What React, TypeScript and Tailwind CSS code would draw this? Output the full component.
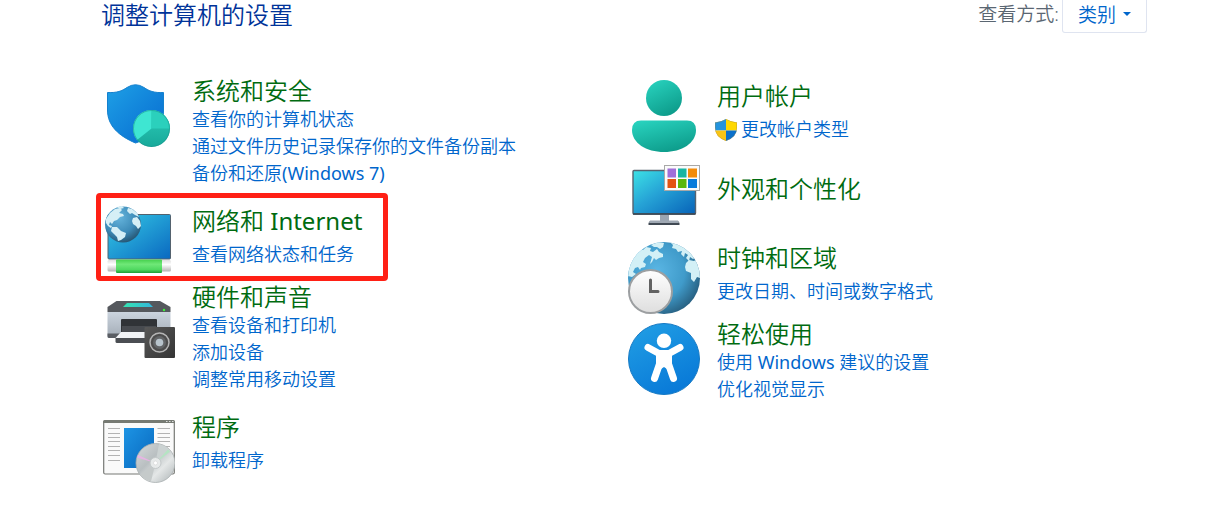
import type { ReactNode } from "react";

const cjk = "font-['Noto_Sans','Noto_Sans_CJK_SC',sans-serif]";

function SecurityIcon() {
  return (
    <svg className="mt-2 h-[66px] w-[72px] shrink-0" viewBox="0 0 72 66" aria-hidden="true">
      <defs>
        <linearGradient id="secShield" x1="0" y1="0" x2="1" y2="1">
          <stop offset="0" stopColor="#1ea0e6" />
          <stop offset="1" stopColor="#0669cf" />
        </linearGradient>
        <linearGradient id="secPie" x1="0" y1="0" x2="0" y2="1">
          <stop offset="0" stopColor="#2dccb8" />
          <stop offset="1" stopColor="#17a99a" />
        </linearGradient>
      </defs>
      <path d="M4.500 8.500C14 9 19 7 24 3.500Q32.500 -2 41 3.500C46 7 51 9 60.500 8.500V27C60.500 44 48 54 32.500 59C16 52 4.500 42 4.500 26Z" fill="url(#secShield)" stroke="#1480ce" strokeWidth="1" />
      <circle cx="48.500" cy="44.500" r="18.500" fill="url(#secPie)" />
      <path d="M48.500 44.500L34 56A18.500 18.500 0 0 1 48.500 26Z" fill="#3ee6d2" />
      <path d="M48.500 26A18.500 18.500 0 0 1 67 44.500H48.500Z" fill="#2bd0bc" />
      <circle cx="48.500" cy="44.500" r="18" fill="none" stroke="#178f88" strokeOpacity=".5" />
    </svg>
  );
}

function NetworkIcon() {
  return (
    <svg className="h-[68px] w-[72px] shrink-0" viewBox="0 0 72 68" aria-hidden="true">
      <defs>
        <linearGradient id="netScreen" x1="0" y1="0" x2="1" y2="1">
          <stop offset="0" stopColor="#35cbe6" />
          <stop offset="1" stopColor="#0a68c0" />
        </linearGradient>
        <radialGradient id="netGlobe" cx=".4" cy=".3" r=".75">
          <stop offset="0" stopColor="#65b4dc" />
          <stop offset=".6" stopColor="#3d8bb8" />
          <stop offset="1" stopColor="#24506c" />
        </radialGradient>
        <linearGradient id="netCable" x1="0" y1="0" x2="0" y2="1">
          <stop offset="0" stopColor="#45d04c" />
          <stop offset=".35" stopColor="#6fe878" />
          <stop offset=".75" stopColor="#4fd860" />
          <stop offset="1" stopColor="#1b9d35" />
        </linearGradient>
        <linearGradient id="netPlug" x1="0" y1="0" x2="0" y2="1">
          <stop offset="0" stopColor="#dedede" />
          <stop offset=".4" stopColor="#ffffff" />
          <stop offset="1" stopColor="#b4b4b4" />
        </linearGradient>
      </defs>
      <rect x="5" y="8.500" width="62.500" height="44.500" rx="1" fill="url(#netScreen)" stroke="#53626e" />
      <rect x="4.500" y="54" width="63.500" height="11.500" rx="1.500" fill="url(#netPlug)" />
      <rect x="13" y="53.500" width="46" height="13.500" rx="1" fill="url(#netCable)" />
      <circle cx="20" cy="18.500" r="18" fill="url(#netGlobe)" />
      <g fill="#d5eff6">
        <path d="M3 13L7 7L12 3L17 2L19 4L16 7L20 8L21 10L17 11L14 14L11 15L9 18L7 16L6 19L9 20L8 22L5 20L3 17Z" />
        <path d="M9 21L14 21L18 25L23 27L22 31L18 34L15 35L14 31L11 28L8 25Z" />
        <path d="M14 1L19 0L21 2L17 3Z" />
        <path d="M25 2L29 3L34 7L36 11L32 9L29 7L27 8L24 5Z" />
        <path d="M30 12L34 11L37 15L38 20L35 23L33 20L30 18L29 15Z" />
      </g>
    </svg>
  );
}

function HardwareIcon() {
  return (
    <svg className="mt-[18px] h-[60px] w-[72px] shrink-0" viewBox="0 0 72 60" aria-hidden="true">
      <defs>
        <linearGradient id="hwBody" x1="0" y1="0" x2="0" y2="1">
          <stop offset="0" stopColor="#cbd4de" />
          <stop offset="1" stopColor="#a2abb5" />
        </linearGradient>
        <linearGradient id="hwGlass" x1="0" y1="0" x2="1" y2="0">
          <stop offset="0" stopColor="#35e5b1" />
          <stop offset="1" stopColor="#33b5dc" />
        </linearGradient>
        <linearGradient id="hwBox" x1="0" y1="0" x2="1" y2="1">
          <stop offset="0" stopColor="#585858" />
          <stop offset="1" stopColor="#343434" />
        </linearGradient>
      </defs>
      <path d="M13.500 1H57L67.500 7V12H4.500V7Z" fill="#55585d" />
      <path d="M24 3H46L50 7H20Z" fill="url(#hwGlass)" />
      <circle cx="61" cy="10" r="1.200" fill="#3cf43a" />
      <path d="M4.500 12H67.500V36.500Q67.500 38 66 38H6Q4.500 38 4.500 36.500Z" fill="url(#hwBody)" />
      <path d="M4.500 33.500H17L14 38H6Q4.500 38 4.500 36Z" fill="#5a5e64" />
      <rect x="18" y="19" width="36" height="14" rx="1" fill="#303337" />
      <path d="M19 26H53V33H19Z" fill="#484b50" />
      <path d="M18 32H44V38H12.500Z" fill="#f1f3f6" />
      <path d="M12.500 38H44V43H14Q12.500 43 12.500 41.500Z" fill="#4b4e53" />
      <rect x="41.500" y="27" width="30.500" height="31" rx="1" fill="url(#hwBox)" />
      <circle cx="56.500" cy="42.500" r="9.500" fill="#4d4d4d" stroke="#b5b5b5" strokeWidth="1.500" />
      <circle cx="56.500" cy="42.500" r="6.500" fill="#626466" />
      <circle cx="56.500" cy="42.500" r="3.800" fill="#b8c4cc" />
    </svg>
  );
}

function ProgramsIcon() {
  const rows = [10.5, 15.5, 19.5, 23.5, 28.5, 32.5, 37.5, 42.5];
  return (
    <svg className="mt-[6px] h-[66px] w-[72px] shrink-0" viewBox="0 0 72 66" aria-hidden="true">
      <defs>
        <linearGradient id="prBlue" x1="0" y1="0" x2="1" y2="1">
          <stop offset="0" stopColor="#1d94e4" />
          <stop offset="1" stopColor="#0867bd" />
        </linearGradient>
        <linearGradient id="prDisc" x1="0" y1="0" x2="1" y2="1">
          <stop offset="0" stopColor="#d6dbdc" />
          <stop offset=".4" stopColor="#b9bfc1" />
          <stop offset=".65" stopColor="#e4e7e7" />
          <stop offset="1" stopColor="#aab1b3" />
        </linearGradient>
      </defs>
      <rect x=".7" y="3" width="70.600" height="53" rx="1.500" fill="#fafafa" stroke="#777975" strokeWidth="1.200" />
      <path d="M0 5V3.500Q0 2 1.500 2H70.500Q72 2 72 3.500V5Z" fill="#767a73" />
      <path d="M63 3.500h1.500M66 3.500h1.500M69 3.500h1.500" stroke="#dedede" />
      <path d={rows.map((y) => `M5 ${y}H17M54.500 ${y}H67`).join("")} stroke="#b3b3b3" fill="none" />
      <rect x="21" y="10" width="30" height="40" fill="url(#prBlue)" />
      <circle cx="52.500" cy="45" r="19.500" fill="url(#prDisc)" stroke="#a7adae" strokeWidth=".8" />
      <path d="M52.500 45L56 26A19.500 19.500 0 0 1 68 33.500Z" fill="#cbd2d2" />
      <path d="M52.500 45L37 56.500A19.500 19.500 0 0 0 48 63.500Z" fill="#c5caca" />
      <path d="M52.500 45L34 39.500L35 37Z" fill="#e8b4e4" />
      <path d="M52.500 45L65 31.500L67 33.500Z" fill="#b4e4c2" />
      <circle cx="52.500" cy="45" r="5.500" fill="#e7eaea" stroke="#c3c8c9" />
      <circle cx="52.500" cy="45" r="2" fill="#ffffff" stroke="#d4d4d4" strokeWidth=".6" />
    </svg>
  );
}

function UserIcon() {
  return (
    <svg className="h-[72px] w-[72px] shrink-0" viewBox="0 0 72 72" aria-hidden="true">
      <defs>
        <linearGradient id="usTeal" x1=".2" y1="0" x2=".7" y2="1">
          <stop offset="0" stopColor="#28d1bd" />
          <stop offset="1" stopColor="#0c9a89" />
        </linearGradient>
      </defs>
      <circle cx="36" cy="18" r="18" fill="url(#usTeal)" />
      <path d="M13 40.500H59Q68 40.500 68 50C68 63 54 72 36 72C18 72 4 63 4 50Q4 40.500 13 40.500Z" fill="url(#usTeal)" />
    </svg>
  );
}

function AppearanceIcon() {
  return (
    <svg className="h-[62px] w-[72px] shrink-0" viewBox="0 0 72 62" aria-hidden="true">
      <defs>
        <linearGradient id="apScreen" x1="0" y1="0" x2="1" y2="1">
          <stop offset="0" stopColor="#3ce2e6" />
          <stop offset=".45" stopColor="#26a3d6" />
          <stop offset="1" stopColor="#0762b8" />
        </linearGradient>
      </defs>
      <rect x="32" y="51" width="9" height="8" fill="#9ba6b2" />
      <path d="M22 57H50L51.500 59V61H20.500V59Z" fill="#414a54" />
      <path d="M22 56.500H50L51 59H21Z" fill="#9fa8b3" />
      <rect x="5" y="6.500" width="62.500" height="43.500" rx="1" fill="url(#apScreen)" stroke="#566370" strokeWidth="1.400" />
      <path d="M5 50H67.500" stroke="#38444f" strokeWidth="1.500" />
      <rect x="36.500" y="1.500" width="35" height="25" fill="#fbfbfb" stroke="#a8a8a8" />
      <rect x="39.500" y="4.500" width="8.500" height="9" fill="#a06fd8" />
      <rect x="50" y="4.500" width="8.500" height="9" fill="#19b5a2" />
      <rect x="60" y="4.500" width="9" height="9" fill="#f38b0a" />
      <rect x="39.500" y="15" width="8.500" height="9" fill="#e35413" />
      <rect x="50" y="15" width="8.500" height="9" fill="#5bb70c" />
      <rect x="60" y="15" width="9" height="9" fill="#087bdb" />
    </svg>
  );
}

function ClockIcon() {
  return (
    <svg className="h-[72px] w-[72px] shrink-0" viewBox="0 0 72 72" aria-hidden="true">
      <defs>
        <radialGradient id="clGlobe" cx=".4" cy=".4" r=".65">
          <stop offset="0" stopColor="#5ab6e4" />
          <stop offset=".6" stopColor="#409bca" />
          <stop offset="1" stopColor="#275f80" />
        </radialGradient>
        <linearGradient id="clFace" x1="0" y1="0" x2="0" y2="1">
          <stop offset="0" stopColor="#ffffff" />
          <stop offset="1" stopColor="#dedede" />
        </linearGradient>
        <clipPath id="clClip"><circle cx="36" cy="36" r="36" /></clipPath>
      </defs>
      <circle cx="36" cy="36" r="36" fill="url(#clGlobe)" />
      <g fill="#d3f0f6" clipPath="url(#clClip)">
        <path d="M0 34L2 20L12 7L15 8L18 5L23 6L22 9L25 10L29 7L31 10L35 12L35 15L31 16L28 18L26 16L24 20L22 22L24 15L21 13L17 16L15 20L18 22L17 25L13 26L12 28L10 25L7 26L5 30L8 32L4 35Z" />
        <path d="M23 3L30 0L36 1L35 5L32 7L29 5L26 5Z" />
        <path d="M42 0L52 0L62 8L68 15L65 17L62 15L61 19L58 16L60 13L57 11L56 15L53 12L54 9L50 10L48 7L44 6L45 3Z" />
        <path d="M58 21L61 18L66 19L69 17L72 28L72 36L69 35L66 40L63 37L63 31L58 29L57 25Z" />
      </g>
      <circle cx="22.500" cy="49.500" r="21.500" fill="url(#clFace)" stroke="#9c9fa1" strokeWidth="2" />
      <path d="M22.500 38V49.500H30" fill="none" stroke="#626262" strokeWidth="3" strokeLinecap="round" />
    </svg>
  );
}

function EaseIcon() {
  return (
    <svg className="mt-1 h-[72px] w-[72px] shrink-0" viewBox="0 0 72 72" aria-hidden="true">
      <defs>
        <linearGradient id="eaBlue" x1=".2" y1="0" x2=".7" y2="1">
          <stop offset="0" stopColor="#209de4" />
          <stop offset="1" stopColor="#0878d7" />
        </linearGradient>
      </defs>
      <circle cx="36" cy="36" r="35.500" fill="url(#eaBlue)" stroke="#1579c4" />
      <circle cx="36" cy="17.800" r="7.200" fill="#ffffff" />
      <path d="M20 24.500L31 30.500H41L52 24.500" fill="none" stroke="#ffffff" strokeWidth="7" strokeLinecap="round" strokeLinejoin="round" />
      <path d="M28 28H44V42L39 46L36 44L33 46L28 42Z" fill="#ffffff" />
      <path d="M31.500 41L26.500 55.500M40.500 41L45.500 55.500" fill="none" stroke="#ffffff" strokeWidth="7" strokeLinecap="round" />
    </svg>
  );
}

function ShieldBadge() {
  return (
    <svg className="-ml-[2px] h-[22px] w-[22px] shrink-0" viewBox="0 0 22 22" aria-hidden="true">
      <defs>
        <clipPath id="uacClip">
          <path d="M0 3.500Q6 3 11 0Q16 3 22 3.500V9Q22 18 11 22Q0 18 0 9Z" />
        </clipPath>
      </defs>
      <g clipPath="url(#uacClip)">
        <path d="M0 0H11V11.500H0Z" fill="#2494de" />
        <path d="M11 0H22V11.500H11Z" fill="#ffd800" />
        <path d="M0 11.500H11V22H0Z" fill="#f9c414" />
        <path d="M11 11.500H22V22H11Z" fill="#0b70ca" />
        <path d="M0 3.500Q6 3 11 0Q16 3 22 3.500V9Q22 18 11 22Q0 18 0 9Z" fill="none" stroke="#a08537" strokeOpacity=".6" />
      </g>
    </svg>
  );
}

// Latin words take the regular weight, which balances the lighter Chinese glyphs.
function MixedText({ text }: { text: string }) {
  return (
    <span>
      {text.split(/([ -~]+)/).map((part, i) =>
        i % 2 === 1 ? <span key={i} className="font-normal">{part}</span> : part,
      )}
    </span>
  );
}

type CategoryProps = {
  icon: ReactNode;
  title: string;
  links: string[];
  className?: string;
  textClass?: string;
  linksClass?: string;
  badge?: ReactNode;
};

function Category({ icon, title, links, className = "", textClass = "", linksClass = "", badge }: CategoryProps) {
  return (
    <section className={`flex items-start gap-[17px] ${className}`}>
      {icon}
      <div className={`whitespace-nowrap ${textClass}`}>
        <h2 className="text-[24px] leading-[30px] text-[#006b10]">
          <a href="#"><MixedText text={title} /></a>
        </h2>
        {links.length > 0 && (
          <ul className={`text-[18px] leading-[27px] text-[#0066cc] ${linksClass}`}>
            {links.map((link) => (
              <li key={link}>
                <a href="#" className="inline-flex items-center gap-1 align-top hover:underline">
                  {badge}
                  <MixedText text={link} />
                </a>
              </li>
            ))}
          </ul>
        )}
      </div>
    </section>
  );
}

export default function App() {
  return (
    <div className={`min-h-screen bg-white font-[350] ${cjk}`}>
      <header className="flex items-start justify-between pr-[74px] pl-[101px]">
        <h1 className="text-[24px] leading-[30px] text-[#003399]">调整计算机的设置</h1>
        <div className="flex items-start">
          <label htmlFor="view" className="pr-[3px] text-[19px] leading-[28px] text-[#5a6672]">查看方式:</label>
          <div className="grid items-center">
            <select
              id="view"
              defaultValue="category"
              className="col-start-1 row-start-1 h-[33px] w-[85px] appearance-none rounded-b-[3px] border border-t-0 border-[#dfe4f0] bg-white pb-[3px] pl-[15px] text-[19px] leading-[28px] text-[#0066cc]"
            >
              <option value="category">类别</option>
              <option value="large">大图标</option>
              <option value="small">小图标</option>
            </select>
            <svg className="pointer-events-none col-start-1 row-start-1 mr-4 mb-[5px] h-1 w-2 justify-self-end" viewBox="0 0 8 4" aria-hidden="true">
              <path d="M0 0H8L4 4Z" fill="#0066cc" />
            </svg>
          </div>
        </div>
      </header>

      <main className="grid grid-cols-2 pt-[43px] pr-[68px] pl-[103px]">
        <div>
          <Category
            icon={<SecurityIcon />}
            title="系统和安全"
            links={["查看你的计算机状态", "通过文件历史记录保存你的文件备份副本", "备份和还原(Windows 7)"]}
          />
          <Category
            className="mt-[6px] -ml-[7px] w-[292px] rounded-[4px] border-[5px] border-[#ff2015] pt-2 pb-[2px] pl-[2px]"
            icon={<NetworkIcon />}
            title="网络和 Internet"
            linksClass="mt-[5px]"
            links={["查看网络状态和任务"]}
          />
          <Category
            className="mt-px"
            icon={<HardwareIcon />}
            title="硬件和声音"
            links={["查看设备和打印机", "添加设备", "调整常用移动设置"]}
          />
          <Category
            className="mt-[19px]"
            icon={<ProgramsIcon />}
            title="程序"
            linksClass="mt-[5px]"
            links={["卸载程序"]}
          />
        </div>
        <div className="pt-1">
          <Category
            icon={<UserIcon />}
            title="用户帐户"
            textClass="pt-px"
            linksClass="mt-[5px]"
            links={["更改帐户类型"]}
            badge={<ShieldBadge />}
          />
          <Category className="mt-3" icon={<AppearanceIcon />} title="外观和个性化" textClass="pt-[10px]" links={[]} />
          <Category
            className="mt-4"
            icon={<ClockIcon />}
            title="时钟和区域"
            textClass="pt-px"
            linksClass="mt-[5px]"
            links={["更改日期、时间或数字格式"]}
          />
          <Category
            className="mt-[5px]"
            icon={<EaseIcon />}
            title="轻松使用"
            links={["使用 Windows 建议的设置", "优化视觉显示"]}
          />
        </div>
      </main>
    </div>
  );
}
